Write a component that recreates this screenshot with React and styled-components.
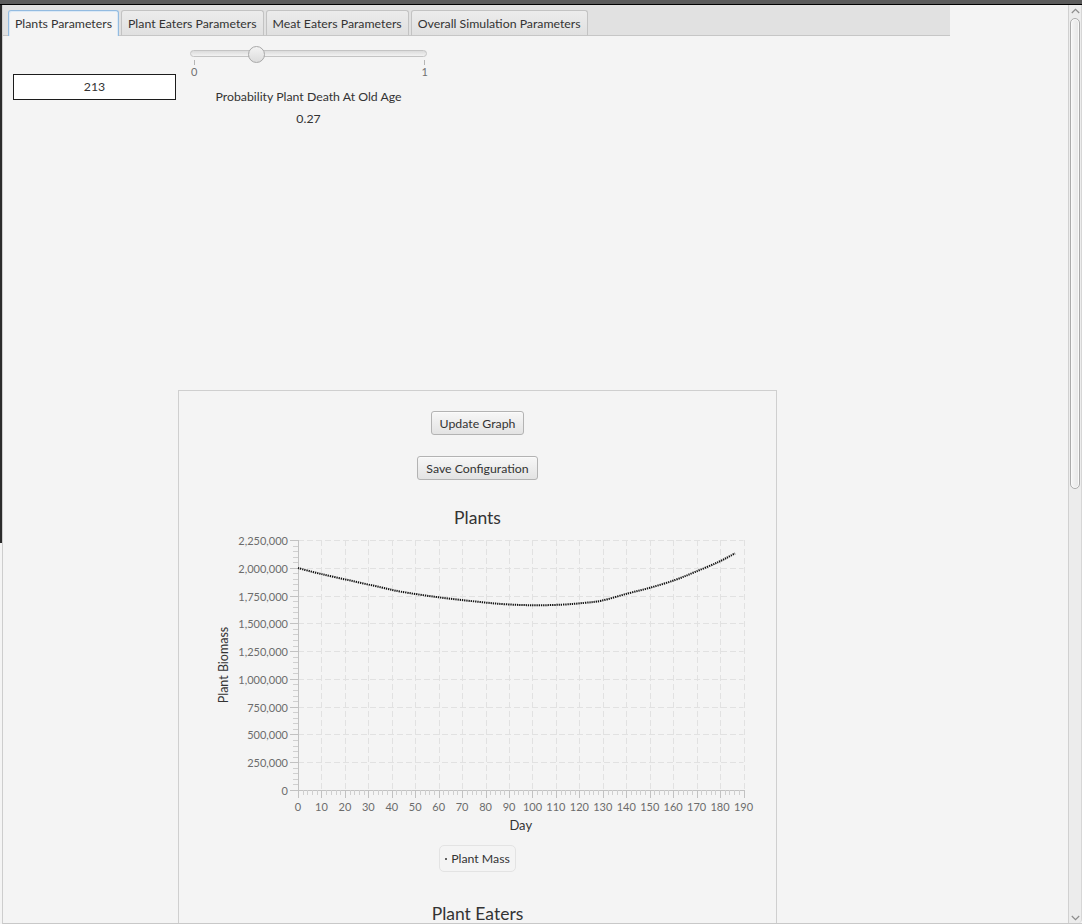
import React from "react";
import styled, { createGlobalStyle } from "styled-components";

const UI_FONT = `Lato, "Liberation Sans", sans-serif`;
const UI_SIZE = "12.3px";

const GlobalStyle = createGlobalStyle`
  html, body { margin: 0; padding: 0; }
  body {
    background: #f4f4f4;
    font-family: ${UI_FONT};
    color: #333;
    overflow: hidden;
  }
  #root { width: 1082px; height: 924px; }
`;

const Screen = styled.div`
  width: 1082px;
  height: 924px;
  display: flex;
  flex-direction: column;
  overflow: hidden;
`;

const TitleStrip = styled.div`
  flex: none;
  height: 4px;
  background: #5b5b5b;
  border-bottom: 1px solid #000;
`;

const Desktop = styled.div`
  flex: 1;
  min-height: 0;
  display: flex;
  padding-left: 2px;
  background: linear-gradient(to bottom, #2b2b2b 538px, #f4f4f4 538px);
`;

const Window = styled.div`
  flex: 1;
  min-width: 0;
  display: flex;
  background: #f4f4f4;
  border-left: 1px solid #cdcdcd;
  border-bottom: 1px solid #c8c8c8;
  overflow: hidden;
`;

const Viewport = styled.div`
  flex: 1;
  min-width: 0;
  overflow: hidden;
  display: flex;
  flex-direction: column;
`;

/* ---------- Tabs ---------- */
const TabHeader = styled.div`
  flex: none;
  width: 947px;
  height: 31px;
  box-sizing: border-box;
  display: flex;
  align-items: flex-start;
  gap: 2px;
  padding: 5px 0 0 5px;
  background: #e1e1e1;
  border-bottom: 1px solid #c6c6c6;
`;

const Tab = styled.div`
  height: 26px;
  box-sizing: border-box;
  padding: 0 6px;
  display: flex;
  align-items: center;
  font-size: ${UI_SIZE};
  color: #333;
  white-space: nowrap;
  border-radius: 3px 3px 0 0;
  border: 1px solid ${(p) => (p.$active ? "#93bbe0" : "#c3c3c3")};
  border-bottom: ${(p) => (p.$active ? "none" : "1px solid #c6c6c6")};
  background: ${(p) =>
    p.$active ? "#f4f4f4" : "linear-gradient(to bottom, #ececec, #e0e0e0)"};
  box-shadow: ${(p) =>
    p.$active ? "inset 1px 1px 0 #dbe9f6, inset -1px 0 0 #dbe9f6" : "none"};
`;

/* ---------- Parameters ---------- */
const ParamRow = styled.div`
  display: flex;
  align-items: center;
  gap: 14px;
  padding-left: 10px;
  margin-top: 10px;
`;

const NumberField = styled.div`
  width: 163px;
  height: 26px;
  box-sizing: border-box;
  border: 1px solid #1c1c1c;
  background: #fff;
  display: flex;
  align-items: center;
  justify-content: center;
  font-size: ${UI_SIZE};
  color: #333;
`;

const SliderColumn = styled.div`
  width: 237px;
  display: flex;
  flex-direction: column;
  align-items: stretch;
`;

const SliderTrackArea = styled.div`
  position: relative;
  height: 14px;
  padding-top: 4px;
  box-sizing: border-box;
`;

const SliderTrack = styled.div`
  height: 7px;
  box-sizing: border-box;
  border: 1px solid #c4c4c4;
  border-radius: 4px;
  background: linear-gradient(to bottom, #dcdcdc, #f2f2f2);
`;

const SliderThumb = styled.div`
  position: absolute;
  top: 0px;
  width: 17px;
  height: 17px;
  box-sizing: border-box;
  border-radius: 50%;
  border: 1px solid #a8a8a8;
  background: linear-gradient(to bottom, #f3f3f3, #dcdcdc);
`;

const TickRow = styled.div`
  display: flex;
  justify-content: space-between;
  padding: 0 2px 0 4px;
  height: 5px;
`;

const Tick = styled.div`
  width: 1px;
  height: 5px;
  background: #b5b5b5;
`;

const TickLabels = styled.div`
  display: flex;
  justify-content: space-between;
  padding: 0 0 0 1px;
  margin-right: -1px;
  font-size: 11px;
  line-height: 14px;
  color: #707070;
`;

const SliderName = styled.div`
  margin-top: 10px;
  text-align: center;
  font-size: ${UI_SIZE};
  line-height: 16px;
  white-space: nowrap;
  color: #333;
`;

const SliderValue = styled.div`
  margin-top: 6px;
  text-align: center;
  font-size: ${UI_SIZE};
  line-height: 16px;
  color: #333;
`;

/* ---------- Graph card ---------- */
const GraphCard = styled.div`
  flex: none;
  margin: 263px 0 0 175px;
  width: 599px;
  box-sizing: border-box;
  border: 1px solid #cfcfcf;
  border-bottom: none;
  padding-top: 20px;
  display: flex;
  flex-direction: column;
  align-items: center;
`;

const Button = styled.button`
  height: 24px;
  padding: 0 8px;
  margin-bottom: ${(p) => p.$gap || 0}px;
  box-sizing: border-box;
  font-family: ${UI_FONT};
  font-size: ${UI_SIZE};
  color: #333;
  border: 1px solid #b3b3b3;
  border-radius: 3px;
  background: linear-gradient(to bottom, #f7f7f7, #e3e3e3);
  box-shadow: inset 0 1px 0 #fbfbfb;
`;

const ChartTitle = styled.div`
  margin-top: ${(p) => p.$top}px;
  font-size: 17.5px;
  line-height: 22px;
  color: #333;
`;

const Legend = styled.div`
  margin-top: 10px;
  height: 27px;
  box-sizing: border-box;
  padding: 0 5px;
  display: flex;
  align-items: center;
  gap: 4px;
  border: 1px solid #e3e3e3;
  border-radius: 5px;
  font-size: ${UI_SIZE};
  color: #333;
`;

const LegendDot = styled.span`
  width: 2px;
  height: 2px;
  border-radius: 1px;
  background: #333;
`;

/* ---------- Scrollbar ---------- */
const ScrollBar = styled.div`
  flex: none;
  width: 14px;
  box-sizing: border-box;
  display: flex;
  flex-direction: column;
  background: #ececec;
  border-left: 1px solid #d0d0d0;
  border-right: 1px solid #d6d6d6;
  border-radius: 0 0 4px 0;
`;

const ScrollArrow = styled.div`
  flex: none;
  height: ${(p) => p.$h}px;
  display: flex;
  align-items: center;
  justify-content: center;
`;

const ScrollTrack = styled.div`
  flex: 1;
  padding: 1px 1px;
`;

const ScrollThumb = styled.div`
  height: 471px;
  box-sizing: border-box;
  border: 1px solid #ababab;
  border-radius: 6px;
  background: linear-gradient(to right, #f6f6f6, #e6e6e6);
  box-shadow: inset 0 0 0 1px #fafafa;
`;

const Chevron = ({ up }) => (
  <svg width="9" height="6" viewBox="0 0 9 6">
    <path
      d={up ? "M0.8 5 L4.5 1.3 L8.2 5" : "M0.8 1 L4.5 4.7 L8.2 1"}
      fill="none"
      stroke="#8c8c8c"
      strokeWidth="1.2"
    />
  </svg>
);

/* ---------- Chart ---------- */
const CHART = { w: 554, h: 305, L: 97, R: 542.5, T: 10, B: 260 };
const X_MAX = 190;
const Y_MAX = 2250000;

const data = [
  [0, 1998000], [9.8, 1944000], [22.6, 1884000], [35.4, 1824000],
  [43.9, 1785000], [58, 1740000], [72.4, 1704000], [86.8, 1674000],
  [100, 1663000], [112.4, 1668000], [122, 1684000], [129.5, 1704000],
  [140.9, 1770000], [150.8, 1824000], [160.8, 1890000], [169.3, 1962000],
  [179.3, 2052000], [186.4, 2130000],
];

const sx = (d) => CHART.L + (d / X_MAX) * (CHART.R - CHART.L);
const sy = (v) => CHART.B - (v / Y_MAX) * (CHART.B - CHART.T);

function smoothPath(pts) {
  let d = `M${pts[0][0]} ${pts[0][1]}`;
  for (let i = 0; i < pts.length - 1; i++) {
    const p0 = pts[i - 1] || pts[i];
    const p1 = pts[i];
    const p2 = pts[i + 1];
    const p3 = pts[i + 2] || p2;
    const c1x = p1[0] + (p2[0] - p0[0]) / 6;
    const c1y = p1[1] + (p2[1] - p0[1]) / 6;
    const c2x = p2[0] - (p3[0] - p1[0]) / 6;
    const c2y = p2[1] - (p3[1] - p1[1]) / 6;
    d += ` C${c1x} ${c1y} ${c2x} ${c2y} ${p2[0]} ${p2[1]}`;
  }
  return d;
}

const ChartSvg = styled.svg`
  display: block;
  margin-top: 1px;
  font-family: ${UI_FONT};
`;

function PlantChart() {
  const { w, h, L, R, T, B } = CHART;
  const yMajors = Array.from({ length: 10 }, (_, i) => i * 250000);
  const xMajors = Array.from({ length: 20 }, (_, i) => i * 10);
  const yStep = (B - T) / 9;
  const xStep = (R - L) / 19;
  const pts = data.map(([d, v]) => [sx(d), sy(v)]);
  const fmt = (v) => v.toLocaleString("en-US");

  return (
    <ChartSvg width={w} height={h} viewBox={`0 0 ${w} ${h}`}>
      {yMajors.slice(1).map((v) => (
        <line key={"gy" + v} x1={L} x2={R} y1={Math.round(sy(v)) + 0.5} y2={Math.round(sy(v)) + 0.5}
          stroke="#e1e1e1" strokeDasharray="6 3" />
      ))}
      {xMajors.slice(1).map((d) => (
        <line key={"gx" + d} y1={T} y2={B} x1={Math.round(sx(d)) + 0.5} x2={Math.round(sx(d)) + 0.5}
          stroke="#e1e1e1" strokeDasharray="6 3" />
      ))}
      <line x1={L + 0.5} x2={L + 0.5} y1={T} y2={B + 0.5} stroke="#c2c2c2" />
      <line x1={L} x2={R + 0.5} y1={B + 0.5} y2={B + 0.5} stroke="#c2c2c2" />
      {yMajors.map((v, i) => {
        const y = Math.round(sy(v)) + 0.5;
        return (
          <g key={"ty" + v}>
            <line x1={L - 8} x2={L} y1={y} y2={y} stroke="#c2c2c2" />
            <text x={L - 10} y={y + 4} fontSize="11" fill="#6c6c6c" textAnchor="end">{fmt(v)}</text>
            {i < 9 &&
              [1, 2, 3, 4].map((m) => {
                const my = Math.round(sy(v) - (m * yStep) / 5) + 0.5;
                return <line key={m} x1={L - 5} x2={L} y1={my} y2={my} stroke="#cfcfcf" />;
              })}
          </g>
        );
      })}
      {xMajors.map((d, i) => {
        const x = Math.round(sx(d)) + 0.5;
        return (
          <g key={"tx" + d}>
            <line x1={x} x2={x} y1={B} y2={B + 8} stroke="#c2c2c2" />
            <text x={sx(d)} y={B + 21} fontSize="11" fill="#6c6c6c" textAnchor="middle">{d}</text>
            {i < 19 &&
              [1, 2, 3, 4].map((m) => {
                const mx = Math.round(sx(d) + (m * xStep) / 5) + 0.5;
                return <line key={m} x1={mx} x2={mx} y1={B} y2={B + 5} stroke="#cfcfcf" />;
              })}
          </g>
        );
      })}
      <text x={(L + R) / 2} y={B + 40} fontSize="13" fill="#333" textAnchor="middle">Day</text>
      <text x={24} y={(T + B) / 2} fontSize="12.5" fill="#333" textAnchor="middle"
        dominantBaseline="middle" transform={`rotate(-90 24 ${(T + B) / 2})`}>Plant Biomass</text>
      <path d={smoothPath(pts)} fill="none" stroke="#111" strokeWidth="2" strokeDasharray="1.3 0.9" />
    </ChartSvg>
  );
}

/* ---------- Slider ---------- */
function ProbabilitySlider({ value }) {
  const tickLeft = 4;
  const tickRight = 235;
  const center = tickLeft + value * (tickRight - tickLeft);
  return (
    <SliderColumn>
      <SliderTrackArea>
        <SliderTrack />
        <SliderThumb style={{ left: `${center - 8.5}px` }} />
      </SliderTrackArea>
      <TickRow>
        <Tick />
        <Tick />
      </TickRow>
      <TickLabels>
        <span>0</span>
        <span>1</span>
      </TickLabels>
      <SliderName>Probability Plant Death At Old Age</SliderName>
      <SliderValue>{value.toFixed(2)}</SliderValue>
    </SliderColumn>
  );
}

const tabs = [
  "Plants Parameters",
  "Plant Eaters Parameters",
  "Meat Eaters Parameters",
  "Overall Simulation Parameters",
];

export default function App() {
  return (
    <>
      <GlobalStyle />
      <Screen>
        <TitleStrip />
        <Desktop>
          <Window>
            <Viewport>
              <TabHeader>
                {tabs.map((t, i) => (
                  <Tab key={t} $active={i === 0}>{t}</Tab>
                ))}
              </TabHeader>
              <ParamRow>
                <NumberField>213</NumberField>
                <ProbabilitySlider value={0.27} />
              </ParamRow>
              <GraphCard>
                <Button $gap={21}>Update Graph</Button>
                <Button>Save Configuration</Button>
                <ChartTitle $top={27}>Plants</ChartTitle>
                <PlantChart />
                <Legend>
                  <LegendDot />
                  Plant Mass
                </Legend>
                <ChartTitle $top={31}>Plant Eaters</ChartTitle>
              </GraphCard>
            </Viewport>
            <ScrollBar>
              <ScrollArrow $h={12}><Chevron up /></ScrollArrow>
              <ScrollTrack>
                <ScrollThumb />
              </ScrollTrack>
              <ScrollArrow $h={11}><Chevron /></ScrollArrow>
            </ScrollBar>
          </Window>
        </Desktop>
      </Screen>
    </>
  );
}
